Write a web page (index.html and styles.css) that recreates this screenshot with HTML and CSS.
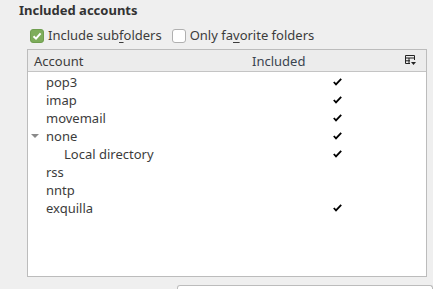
FILE: index.html
```html
<!DOCTYPE html>
<html>
<head>
<meta charset="utf-8">
<link rel="stylesheet" href="styles.css">
</head>
<body>
<div class="page">
  <div class="title">Included accounts</div>
  <div class="opts">
    <label class="opt"><span class="cb checked"><svg width="10" height="10" viewBox="0 0 10 10"><path d="M1.5 5.2 L4 7.6 L8.6 2.4" fill="none" stroke="#fff" stroke-width="2"/></svg></span><span>Include sub<u>f</u>olders</span></label>
    <label class="opt"><span class="cb"></span><span>Only fa<u>v</u>orite folders</span></label>
  </div>
  <div class="table">
    <div class="thead">
      <div class="th-acc">Account</div>
      <div class="th-inc">Included</div>
      <div class="th-icon"><svg width="11" height="11" viewBox="0 0 11 11"><path d="M0.5 0.5 H9.5 V5 M0.5 0.5 V8.5 H5 M0.5 3 H9.5 M4 3 V8.5 M0.5 5.8 H5" fill="none" stroke="#222" stroke-width="1"/><path d="M6 7 H11 L8.5 10 Z" fill="#222"/></svg></div>
    </div>
    <div class="tbody">
      <div class="row"><span class="name">pop3</span><svg class="chk" width="9" height="8" viewBox="0 0 9 8"><path d="M0.8 4 L3 6.4 L8.2 0.8" fill="none" stroke="#000" stroke-width="1.8"/></svg></div>
      <div class="row"><span class="name">imap</span><svg class="chk" width="9" height="8" viewBox="0 0 9 8"><path d="M0.8 4 L3 6.4 L8.2 0.8" fill="none" stroke="#000" stroke-width="1.8"/></svg></div>
      <div class="row"><span class="name">movemail</span><svg class="chk" width="9" height="8" viewBox="0 0 9 8"><path d="M0.8 4 L3 6.4 L8.2 0.8" fill="none" stroke="#000" stroke-width="1.8"/></svg></div>
      <div class="row"><span class="arrow"></span><span class="name">none</span><svg class="chk" width="9" height="8" viewBox="0 0 9 8"><path d="M0.8 4 L3 6.4 L8.2 0.8" fill="none" stroke="#000" stroke-width="1.8"/></svg></div>
      <div class="row child"><span class="name">Local directory</span><svg class="chk" width="9" height="8" viewBox="0 0 9 8"><path d="M0.8 4 L3 6.4 L8.2 0.8" fill="none" stroke="#000" stroke-width="1.8"/></svg></div>
      <div class="row"><span class="name">rss</span></div>
      <div class="row"><span class="name">nntp</span></div>
      <div class="row"><span class="name">exquilla</span><svg class="chk" width="9" height="8" viewBox="0 0 9 8"><path d="M0.8 4 L3 6.4 L8.2 0.8" fill="none" stroke="#000" stroke-width="1.8"/></svg></div>
    </div>
  </div>
  <div class="bottom"><div class="field"></div></div>
</div>
</body>
</html>
```
FILE: styles.css
```css
html, body { margin: 0; padding: 0; }
body {
  background: #efefef;
  font-family: "Noto Sans", "Open Sans", sans-serif;
  font-size: 13px;
  color: #3c3c3c;
  width: 433px;
  height: 289px;
  overflow: hidden;
}
.page { padding-top: 0; height: 289px; overflow: hidden; }
.title {
  font-weight: bold;
  margin-left: 19px;
  height: 22px;
  line-height: 20px;
  color: #333;
}
.opts {
  display: flex;
  gap: 10px;
  margin-left: 30px;
  height: 27px;
  align-items: flex-start;
  padding-top: 6px;
  box-sizing: border-box;
}
.opt { display: flex; align-items: center; gap: 4px; line-height: 15px; }
.cb {
  width: 14px; height: 14px;
  box-sizing: border-box;
  border: 1px solid #b0b0b0;
  border-radius: 3px;
  background: #fff;
  display: flex; align-items: center; justify-content: center;
}
.cb.checked { background: #7ead5b; border-color: #6f9e4f; }
u { text-decoration-thickness: 1px; text-underline-offset: 2px; }
.table {
  margin-left: 27px;
  width: 400px;
  height: 228px;
  box-sizing: border-box;
  border: 1px solid #bcbcbc;
  background: #fff;
}
.thead {
  height: 22px;
  box-sizing: border-box;
  background: #ececec;
  border-bottom: 1px solid #c4c4c4;
  display: flex;
  align-items: center;
  position: relative;
}
.th-acc { margin-left: 6px; width: 218px; }
.th-inc { color: #3a4450; }
.th-icon { position: absolute; left: 377px; top: 5px; line-height: 0; }
.tbody { padding-top: 1px; }
.row {
  height: 18px;
  display: flex;
  align-items: center;
  position: relative;
}
.name { margin-left: 18px; }
.child .name { margin-left: 36px; }
.arrow {
  position: absolute;
  left: 3px; top: 7px;
  width: 0; height: 0;
  border-left: 4px solid transparent;
  border-right: 4px solid transparent;
  border-top: 4px solid #8a8a8a;
}
.chk {
  position: absolute;
  left: 305px;
  top: 5px;
}
.bottom { margin-top: 8px; padding-left: 177px; }
.field {
  height: 12px;
  width: 254px;
  background: #fff;
  border: 1px solid #bcbcbc;
  border-bottom: none;
  border-radius: 3px 3px 0 0;
}
```
